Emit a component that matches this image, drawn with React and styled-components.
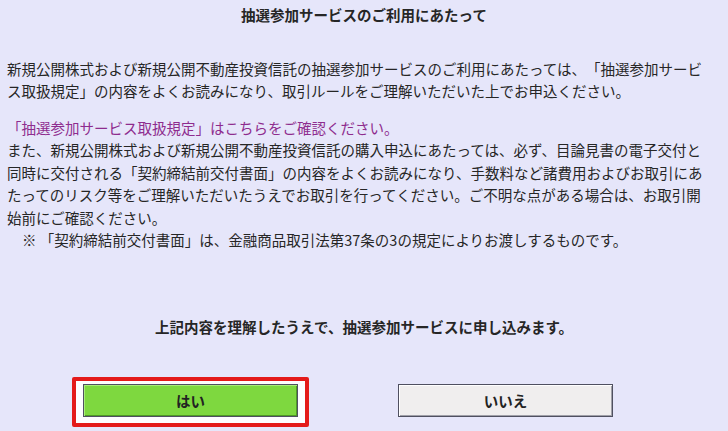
import React from "react";
import styled, { createGlobalStyle } from "styled-components";

const GlobalStyle = createGlobalStyle`
  html, body {
    margin: 0;
    background: #e6e6fa;
  }
  body {
    font-family: "Noto Sans CJK JP", "Noto Sans", sans-serif;
    color: #262626;
    text-spacing-trim: space-all;
  }
`;

const Page = styled.div`
  width: 728px;
  height: 431px;
  box-sizing: border-box;
  padding: 4px 7px 0;
  overflow: hidden;
  font-size: 14.5px;
  line-height: 22.5px;
`;

const Title = styled.h1`
  margin: 0 0 31px;
  font-size: 14.5px;
  font-weight: bold;
  text-align: center;
`;

// lines are broken where the original page breaks them
const Text = styled.p`
  margin: 0;
  white-space: nowrap;
`;

const Lead = styled(Text)`
  margin-bottom: 14px;
`;

const LinkLine = styled.a`
  display: block;
  color: #8e2c8e;
  text-decoration: none;
  cursor: pointer;
`;

const Note = styled(Text)`
  padding-left: 15px;
`;

const Confirm = styled.p`
  margin: 64px 0 38.5px;
  font-weight: bold;
  text-align: center;
`;

const ButtonRow = styled.div`
  display: flex;
  align-items: flex-start;
  padding-left: 65px;
  gap: 89px;
`;

const FocusFrame = styled.div`
  border: 4px solid #e41a1a;
  border-radius: 2px;
  background: #fdfdff;
  padding: 3px 7px 6px;
`;

const Button = styled.button`
  width: 215px;
  height: 33px;
  margin-top: ${(props) => (props.primary ? "0" : "7px")};
  border: 1px solid #4f5060;
  background: ${(props) => (props.primary ? "#7ed83f" : "#f0eeee")};
  box-shadow: inset 1px 1px 0 ${(props) => (props.primary ? "#a8ec78" : "#ffffff")},
    inset -1px -1px 0 ${(props) => (props.primary ? "#4f9a25" : "#a0a0a8")};
  font-family: inherit;
  font-size: 14.5px;
  font-weight: bold;
  color: #222;
  padding: 0;
  cursor: pointer;
`;

function App() {
  return (
    <Page>
      <GlobalStyle />
      <Title>抽選参加サービスのご利用にあたって</Title>
      <Lead>
        新規公開株式および新規公開不動産投資信託の抽選参加サービスのご利用にあたっては、「抽選参加サービ
        <br />
        ス取扱規定」の内容をよくお読みになり、取引ルールをご理解いただいた上でお申込ください。
      </Lead>
      <LinkLine>「抽選参加サービス取扱規定」はこちらをご確認ください。</LinkLine>
      <Text>
        また、新規公開株式および新規公開不動産投資信託の購入申込にあたっては、必ず、目論見書の電子交付と
        <br />
        同時に交付される「契約締結前交付書面」の内容をよくお読みになり、手数料など諸費用およびお取引にあ
        <br />
        たってのリスク等をご理解いただいたうえでお取引を行ってください。ご不明な点がある場合は、お取引開
        <br />
        始前にご確認ください。
      </Text>
      <Note>※ 「契約締結前交付書面」は、金融商品取引法第37条の3の規定によりお渡しするものです。</Note>
      <Confirm>上記内容を理解したうえで、抽選参加サービスに申し込みます。</Confirm>
      <ButtonRow>
        <FocusFrame>
          <Button primary>はい</Button>
        </FocusFrame>
        <Button>いいえ</Button>
      </ButtonRow>
    </Page>
  );
}

export default App;
